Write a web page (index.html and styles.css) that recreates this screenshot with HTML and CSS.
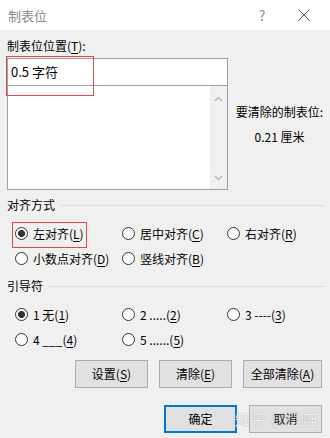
FILE: index.html
```html
<!DOCTYPE html>
<html lang="zh-CN">
<head>
	<meta charset="UTF-8">
	<title>制表位</title>
	<link rel="stylesheet" href="styles.css">
</head>
<body>
	<div class="dialog">
		<div class="titlebar">
			<span class="title">制表位</span>
			<span class="help">?</span>
			<span class="close">
				<svg width="12" height="12" viewBox="0 0 12 12"><path d="M0.5 0.5L11.5 11.5M11.5 0.5L0.5 11.5" stroke="#555" stroke-width="1" fill="none"/></svg>
			</span>
		</div>
		<div class="content">
			<div class="label">制表位位置(<u>T</u>):</div>
			<div class="tabpos">
				<div class="listwrap">
					<div class="input">0.5 字符</div>
					<div class="list">
						<div class="scroll">
							<svg width="9" height="6" viewBox="0 0 9 6"><path d="M1 5L4.5 1.5L8 5" stroke="#b4b4b4" stroke-width="1.3" fill="none"/></svg>
							<svg width="9" height="6" viewBox="0 0 9 6"><path d="M1 1L4.5 4.5L8 1" stroke="#b4b4b4" stroke-width="1.3" fill="none"/></svg>
						</div>
					</div>
					<div class="mark mark-input"></div>
				</div>
				<div class="info">
					<div>要清除的制表位:</div>
					<div class="val">0.21 厘米</div>
				</div>
			</div>

			<div class="group">对齐方式</div>
			<div class="radios">
				<label class="radio on mark-wrap">左对齐(<u>L</u>)<span class="mark mark-radio"></span></label>
				<label class="radio">居中对齐(<u>C</u>)</label>
				<label class="radio">右对齐(<u>R</u>)</label>
				<label class="radio">小数点对齐(<u>D</u>)</label>
				<label class="radio">竖线对齐(<u>B</u>)</label>
			</div>

			<div class="group">引导符</div>
			<div class="radios">
				<label class="radio on">1 无(<u>1</u>)</label>
				<label class="radio">2 .....(<u>2</u>)</label>
				<label class="radio">3 ----(<u>3</u>)</label>
				<label class="radio">4 ___(<u>4</u>)</label>
				<label class="radio">5 ......(<u>5</u>)</label>
			</div>

			<div class="btns">
				<span class="btn">设置(<u>S</u>)</span>
				<span class="btn">清除(<u>E</u>)</span>
				<span class="btn wide">全部清除(<u>A</u>)</span>
			</div>
			<div class="btns bottom">
				<span class="btn ok">确定</span>
				<span class="btn cancel"><span class="wm">知乎 @喵喵</span><span class="txt">取消</span></span>
			</div>
		</div>
	</div>
</body>
</html>
```

FILE: styles.css
```css
body{margin: 0;font-family: "Noto Sans CJK SC", "Noto Sans", sans-serif;font-size: 12px;color: #000;}
u{text-decoration: underline;text-underline-offset: 2px;}
.dialog{width: 330px;height: 438px;background-color: #f0f0f0;overflow: hidden;}
.titlebar{height: 30px;background-color: #fff;display: flex;align-items: center;}
.title{flex: 1;padding-left: 8px;font-size: 13px;color: #8a8a8a;}
.help{width: 20px;font-size: 14px;color: #8a8a8a;margin-right: 26px;text-align: center;}
.close{width: 14px;margin-right: 18px;display: flex;}
.content{padding: 8px 5px 0 7px;}
.label{height: 16px;line-height: 16px;}
.tabpos{display: flex;margin-top: 4px;}
.listwrap{width: 221px;position: relative;}
.input{height: 26px;line-height: 26px;background-color: #fff;border: 1px solid #a0a0a0;border-bottom: none;padding-left: 3px;font-size: 13px;}
.list{height: 103px;background-color: #fff;border: 1px solid #a0a0a0;display: flex;justify-content: flex-end;}
.scroll{width: 17px;background-color: #f0f0f0;display: flex;flex-direction: column;justify-content: space-between;align-items: center;padding: 10px 0 8px;}
.mark{position: absolute;border: 1px solid #e0474c;pointer-events: none;}
.mark-input{left: -1px;top: -2px;width: 86px;height: 38px;}
.info{flex: 1;text-align: center;padding-top: 41px;line-height: 25px;padding-left: 6px;}
.group{display: flex;align-items: center;height: 16px;line-height: 16px;margin-top: 7px;}
.group::after{content: "";flex: 1;height: 1px;background-color: #dcdcdc;margin-left: 6px;}
.radios{display: grid;grid-template-columns: 107px 105px auto;grid-auto-rows: 25px;margin-top: 8px;padding-left: 8px;}
.radio{display: flex;align-items: center;position: relative;white-space: nowrap;}
.radio::before{content: "";width: 11px;height: 11px;border: 1px solid #333;border-radius: 50%;background-color: #fff;margin-right: 5px;box-sizing: content-box;}
.radio.on::before{background: radial-gradient(circle, #333 0 3.2px, #fff 3.8px);}
.mark-radio{left: -3px;top: 1px;width: 73px;height: 24px;}
.btns{display: flex;justify-content: flex-end;gap: 11px;margin-top: 8px;padding-right: 3px;}
.btn{width: 71px;height: 26px;line-height: 26px;text-align: center;background-color: #e1e1e1;border: 1px solid #adadad;position: relative;}
.btn.wide{width: 77px;}
.bottom{margin-top: 17px;gap: 12px;}
.ok{border: 2px solid #0078d7;width: 69px;height: 24px;line-height: 24px;}
.cancel .txt{position: relative;color: #222;}
.wm{position: absolute;left: -15px;top: 0;color: rgba(255,255,255,.9);font-size: 15px;text-shadow: 0 0 1px #888;letter-spacing: 1px;white-space: nowrap;}
```
